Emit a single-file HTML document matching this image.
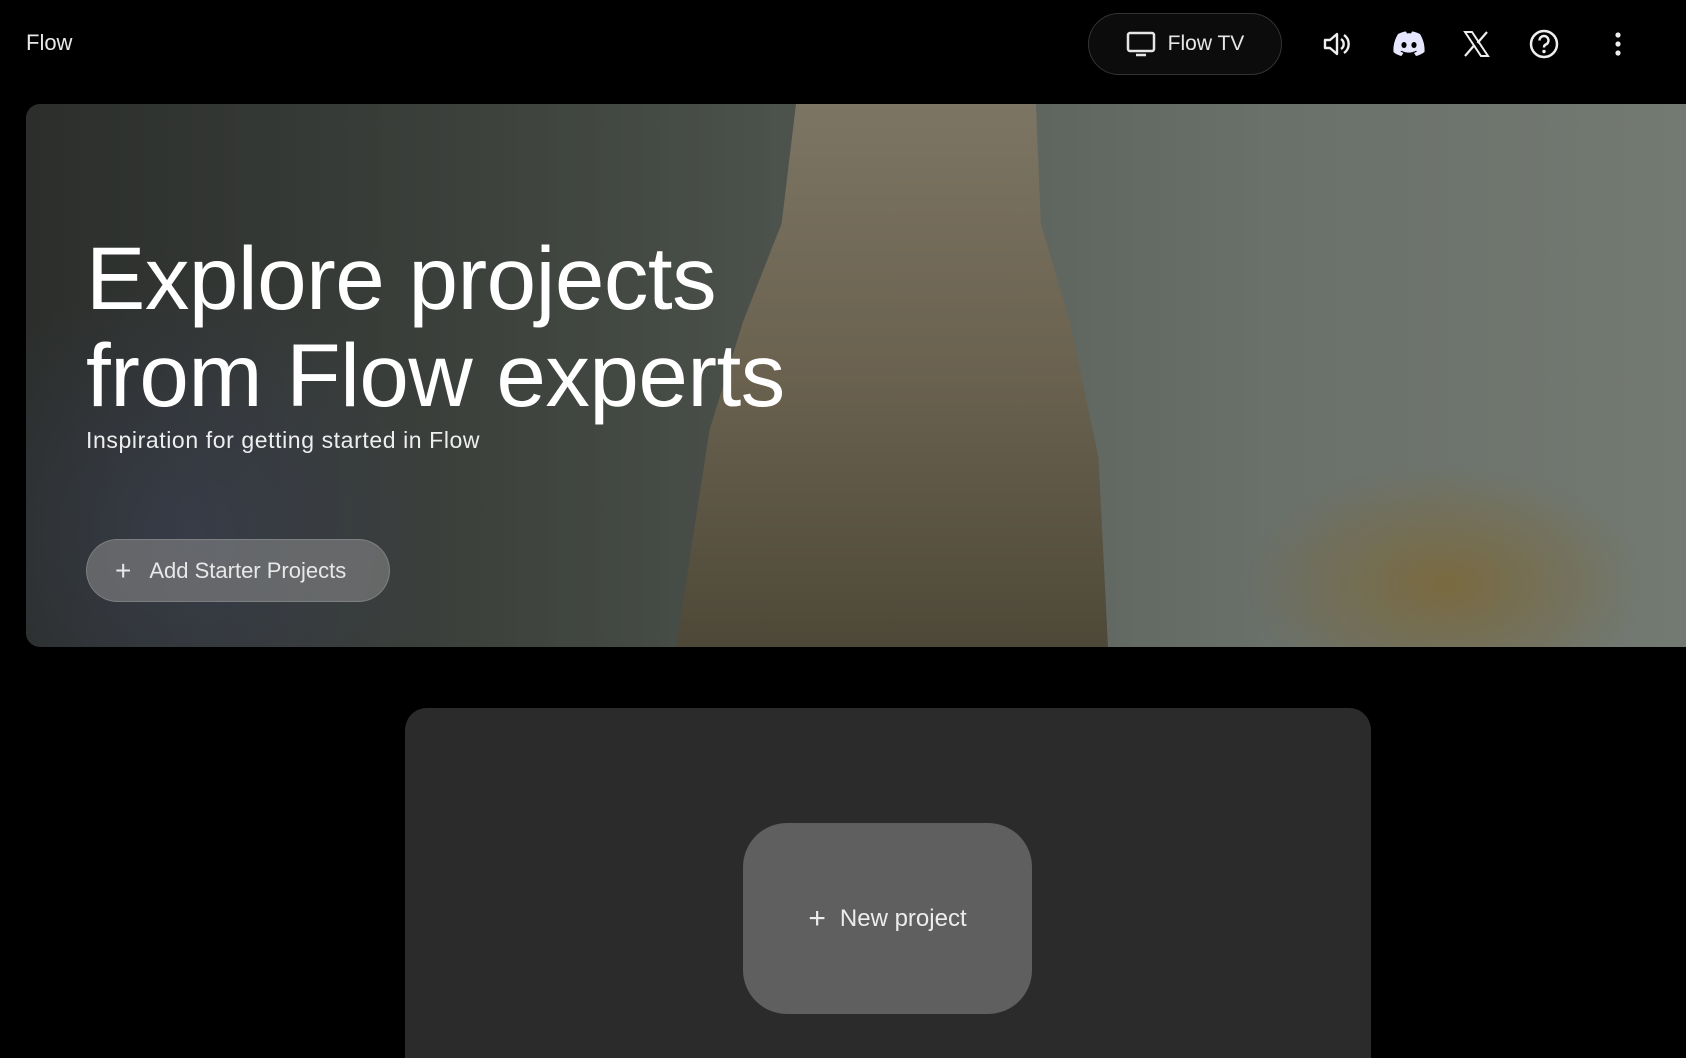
<!DOCTYPE html>
<html><head><meta charset="utf-8"><style>
*{margin:0;padding:0;box-sizing:border-box}
html{width:1686px;height:1058px;overflow:hidden;background:#000}
body{width:1686px;height:1058px;background:#000;overflow:hidden;font-family:"Liberation Sans",sans-serif;color:#fff;position:relative}
.abs{position:absolute}
.logo{left:26px;top:30px;font-size:22px;color:#e8e8e8}
.tv{left:1088px;top:13px;width:194px;height:62px;border:1px solid #333;border-radius:31px;background:#0c0c0c;display:flex;align-items:center;justify-content:center;gap:12px;font-size:21px;color:#e6e6e6}
.ic{top:28px;width:32px;height:32px}
.hero{left:26px;top:104px;width:1660px;height:543px;border-radius:14px 0 0 14px;overflow:hidden;
background:
radial-gradient(ellipse 200px 120px at 1420px 480px,#7a6a40 0%,rgba(100,90,60,0) 100%),
radial-gradient(ellipse 260px 260px at 160px 430px,#4a5060 0%,rgba(60,64,70,0) 100%),
linear-gradient(90deg,#3e423e 0%,#4d534d 35%,#5a605a 55%,#6a706a 75%,#737a72 100%)}
.fig{left:650px;top:0;width:480px;height:543px;background:linear-gradient(180deg,#7d7563,#6a624f 50%,#4e4838);clip-path:polygon(25% 0,75% 0,76% 22%,82% 40%,88% 65%,90% 100%,0 100%,7% 60%,14% 40%,22% 22%)}
.shade{left:0;top:0;width:900px;height:543px;background:linear-gradient(90deg,rgba(0,0,0,.3),rgba(0,0,0,.05))}
h1{left:86px;top:230px;font-weight:400;font-size:89px;line-height:97px;letter-spacing:-0.5px;color:#fff}
.sub{left:86px;top:427px;font-size:23px;letter-spacing:0.6px;color:#eee}
.btn{left:86px;top:539px;width:304px;height:63px;border-radius:32px;background:rgba(140,140,140,.55);border:1px solid rgba(200,200,200,.25);display:flex;align-items:center;padding-left:28px;gap:18px;font-size:22px;color:#e8e8e8}
.panel{left:405px;top:708px;width:966px;height:350px;border-radius:22px 22px 0 0;background:#2b2b2b}
.np{left:743px;top:823px;width:289px;height:191px;border-radius:44px;background:#5f5f5f;display:flex;align-items:center;justify-content:center;gap:14px;font-size:24px;color:#ececec}
</style></head><body>
<div class="abs logo">Flow</div>
<div class="abs tv"><svg width="30" height="26" viewBox="0 0 30 26"><rect x="2" y="2" width="26" height="18" rx="2" fill="none" stroke="#e6e6e6" stroke-width="2.5"/><path d="M10 24h10" stroke="#e6e6e6" stroke-width="2.5"/></svg>Flow TV</div>
<svg class="abs ic" style="left:1320px" viewBox="0 0 32 32"><path d="M5 12h5l7-6v20l-7-6H5z" fill="none" stroke="#eee" stroke-width="2.4" stroke-linejoin="round"/><path d="M21 11a6 6 0 0 1 0 10M24 7a11 11 0 0 1 0 18" fill="none" stroke="#eee" stroke-width="2.4"/></svg>
<svg class="abs ic" style="left:1390px;width:38px" viewBox="0 0 38 32"><path d="M8 6c4-2 7-2.5 8-2.5l1 2c1.5-.3 3-.3 4 0l1-2c1 0 4 .5 8 2.5 3 5 5 11 4.5 18-3 2.3-6 3.5-8.5 4l-2-3c1-.4 2-1 3-1.6l-.8-.6c-5 2.4-10 2.4-15 0l-.8.6c1 .6 2 1.2 3 1.6l-2 3C9 27.5 6 26.3 3.5 24 3 17 5 11 8 6z" fill="#e6e6ff"/><ellipse cx="14" cy="17" rx="2.6" ry="3" fill="#000"/><ellipse cx="24" cy="17" rx="2.6" ry="3" fill="#000"/></svg>
<svg class="abs ic" style="left:1460px" viewBox="0 0 32 32"><path d="M5 4h7l16 24h-7z" fill="none" stroke="#eee" stroke-width="2"/><path d="M27 4L17.5 15M5 28l9.5-11" stroke="#eee" stroke-width="2.2"/></svg>
<svg class="abs ic" style="left:1528px" viewBox="0 0 32 32"><circle cx="16" cy="16" r="13" fill="none" stroke="#eee" stroke-width="2.5"/><path d="M11.5 12.5a4.5 4.5 0 1 1 6 4.2c-1.2.5-1.5 1.3-1.5 2.8" fill="none" stroke="#eee" stroke-width="2.5"/><circle cx="16" cy="23.5" r="1.7" fill="#eee"/></svg>
<svg class="abs ic" style="left:1602px" viewBox="0 0 32 32"><circle cx="16" cy="7" r="2.6" fill="#eee"/><circle cx="16" cy="16" r="2.6" fill="#eee"/><circle cx="16" cy="25" r="2.6" fill="#eee"/></svg>
<div class="abs hero"><div class="abs shade"></div><div class="abs fig"></div></div>
<h1 class="abs">Explore projects<br>from Flow experts</h1>
<div class="abs sub">Inspiration for getting started in Flow</div>
<div class="abs btn"><span style="font-size:28px;font-weight:300">+</span>Add Starter Projects</div>
<div class="abs panel"></div>
<div class="abs np"><span style="font-size:30px;font-weight:300">+</span>New project</div>
</body></html>
